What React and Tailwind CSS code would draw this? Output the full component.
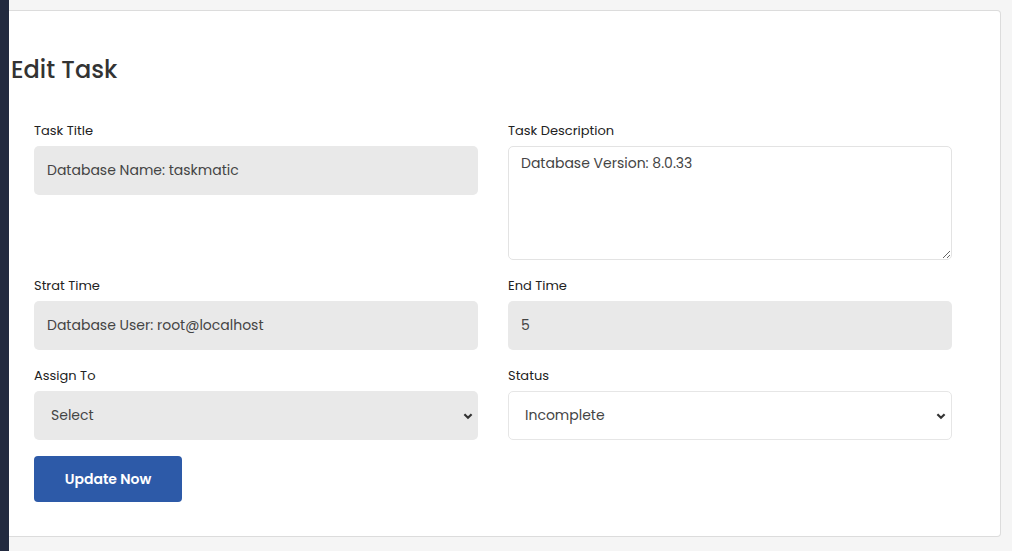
export default function App() {
  const font = { fontFamily: "Poppins, 'Open Sans', 'Liberation Sans', sans-serif" };
  return (
    <div className="flex h-[551px] w-full bg-[#f5f5f5]" style={font}>
      <div className="w-[9px] shrink-0 bg-[#222a3f]" />
      <div className="flex-1 pr-[11px] pt-[10px]">
        <div className="h-[527px] rounded-r-[4px] border border-l-0 border-[#dcdcdc] bg-white pl-[2px] pt-[43px]">
          <h1 className="text-[24px] leading-[32px] font-medium text-[#333]">Edit Task</h1>
          <form className="mt-[35px] pl-[23px] pr-[48px]">
            <div className="grid grid-cols-2 gap-x-[30px]">
              <div>
                <label className="block text-[13px] leading-[20px] text-[#222]">Task Title</label>
                <input
                  readOnly
                  value="Database Name: taskmatic"
                  className="mt-[5px] h-[49px] w-full rounded-[5px] bg-[#e9e9e9] px-[13px] text-[14px] text-[#444] outline-none"
                />
              </div>
              <div>
                <label className="block text-[13px] leading-[20px] text-[#222]">Task Description</label>
                <textarea
                  readOnly
                  value="Database Version: 8.0.33"
                  className="mt-[5px] block h-[114px] w-full rounded-[5px] border border-[#e3e3e3] bg-white px-[12px] py-[6px] text-[14px] text-[#444] outline-none"
                />
              </div>
            </div>
            <div className="mt-[16px] grid grid-cols-2 gap-x-[30px]">
              <div>
                <label className="block text-[13px] leading-[20px] text-[#222]">Strat Time</label>
                <input
                  readOnly
                  value="Database User: root@localhost"
                  className="mt-[5px] h-[49px] w-full rounded-[5px] bg-[#e9e9e9] px-[13px] text-[14px] text-[#444] outline-none"
                />
              </div>
              <div>
                <label className="block text-[13px] leading-[20px] text-[#222]">End Time</label>
                <input
                  readOnly
                  value="5"
                  className="mt-[5px] h-[49px] w-full rounded-[5px] bg-[#e9e9e9] px-[13px] text-[14px] text-[#444] outline-none"
                />
              </div>
            </div>
            <div className="mt-[16px] grid grid-cols-2 gap-x-[30px]">
              <div>
                <label className="block text-[13px] leading-[20px] text-[#222]">Assign To</label>
                <div className="relative mt-[5px] flex h-[49px] items-center rounded-[5px] bg-[#e9e9e9] px-[17px] text-[14px] text-[#444]">
                  Select
                  <svg className="absolute right-[4px] h-[12px] w-[12px] text-[#333]" viewBox="0 0 10 10" fill="none" stroke="currentColor" strokeWidth="1.8">
                    <path d="M2 3.5l3 3 3-3" />
                  </svg>
                </div>
              </div>
              <div>
                <label className="block text-[13px] leading-[20px] text-[#222]">Status</label>
                <div className="relative mt-[5px] flex h-[49px] items-center rounded-[5px] border border-[#e6e6e6] bg-white px-[16px] text-[14px] text-[#444]">
                  Incomplete
                  <svg className="absolute right-[4px] h-[12px] w-[12px] text-[#333]" viewBox="0 0 10 10" fill="none" stroke="currentColor" strokeWidth="1.8">
                    <path d="M2 3.5l3 3 3-3" />
                  </svg>
                </div>
              </div>
            </div>
            <button
              type="button"
              className="mt-[16px] h-[46px] w-[148px] rounded-[4px] bg-[#2d5aa8] text-[14px] font-semibold text-white"
            >
              Update Now
            </button>
          </form>
        </div>
      </div>
    </div>
  );
}
